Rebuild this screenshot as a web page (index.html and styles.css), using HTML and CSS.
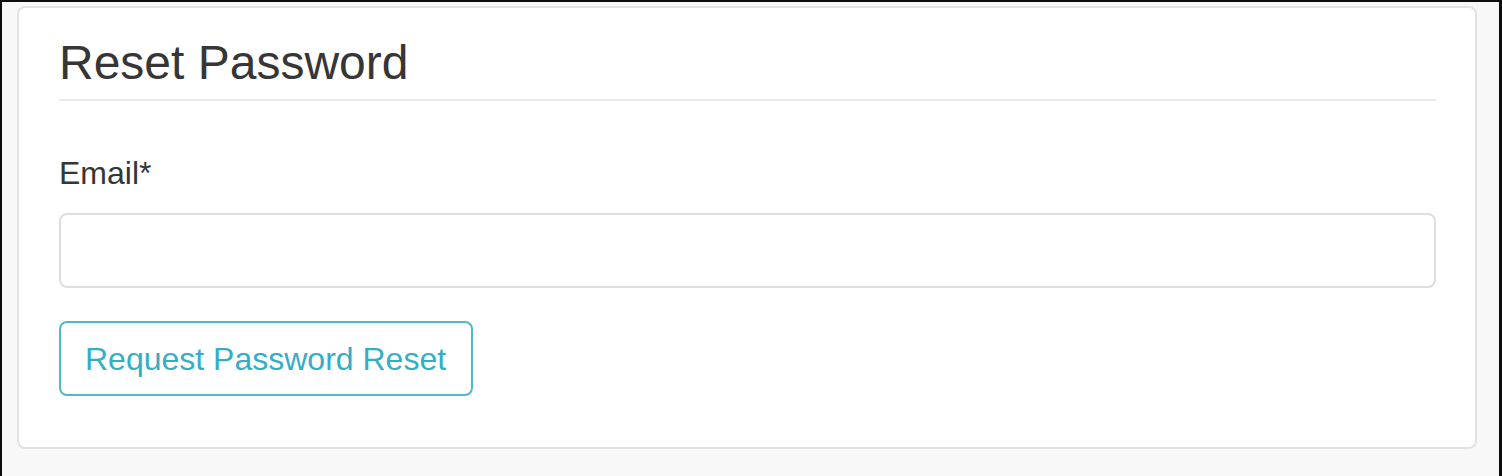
FILE: index.html
```html
<!DOCTYPE html>
<html lang="en">
<head>
<meta charset="utf-8">
<title>Reset Password</title>
<link rel="stylesheet" href="styles.css">
</head>
<body>
<div class="page">
  <div class="card">
    <h3 class="card-title">Reset Password</h3>
    <form class="form">
      <label class="label" for="email">Email*</label>
      <input class="input" id="email" type="email">
      <button class="btn" type="button">Request Password Reset</button>
    </form>
  </div>
</div>
</body>
</html>
```
FILE: styles.css
```css
html, body {
  margin: 0;
  padding: 0;
  height: 100%;
}
body {
  background: #0d0d0d;
  font-family: "Liberation Sans", Arial, sans-serif;
  color: #333333;
}
.page {
  box-sizing: border-box;
  margin: 2px 3px 0 2px;
  min-height: calc(100vh - 2px);
  background: #f8f8f8;
  padding: 4px 22px 0 15px;
}
.card {
  background: #ffffff;
  border: 2px solid #e2e2e2;
  border-radius: 8px;
  padding: 26px 39px 51px 40px;
}
.card-title {
  margin: 0;
  font-size: 48px;
  line-height: 58px;
  font-weight: 400;
  color: #363636;
  padding-bottom: 7px;
  border-bottom: 2px solid #e8ebee;
}
.form {
  display: flex;
  flex-direction: column;
  align-items: flex-start;
  padding-top: 48px;
}
.label {
  font-size: 32px;
  line-height: 48px;
  color: #363636;
}
.input {
  box-sizing: border-box;
  margin-top: 16px;
  width: 100%;
  height: 75px;
  border: 2px solid #dcdfe2;
  border-radius: 8px;
  background: #ffffff;
  font-family: inherit;
  font-size: 32px;
  padding: 0 24px;
}
.btn {
  box-sizing: border-box;
  margin-top: 33px;
  height: 75px;
  padding: 0 25px 0 24px;
  border: 2px solid #4fb8cc;
  border-radius: 8px;
  background: #ffffff;
  color: #35adc6;
  font-family: "Liberation Sans", Arial, sans-serif;
  font-size: 32px;
  line-height: 48px;
  cursor: pointer;
}
```
